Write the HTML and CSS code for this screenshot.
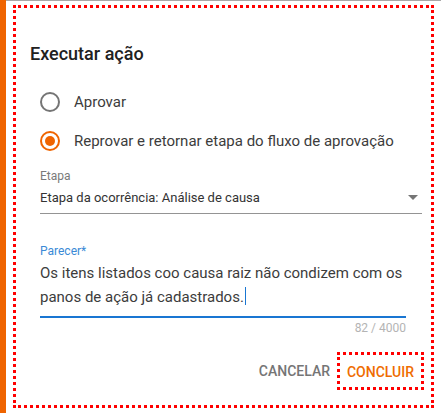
FILE: index.html
```html
<!DOCTYPE html>
<html lang="pt">
<head>
<meta charset="utf-8">
<title>Executar ação</title>
<link rel="stylesheet" href="styles.css">
</head>
<body>
<div class="page">
  <div class="side"></div>
  <div class="main">
    <div class="dialog">
      <h2 class="title">Executar ação</h2>
      <div class="radios">
        <div class="radio"><span class="circle"></span><span class="rlabel">Aprovar</span></div>
        <div class="radio on"><span class="circle"></span><span class="rlabel">Reprovar e retornar etapa do fluxo de aprovação</span></div>
      </div>
      <div class="field select">
        <div class="label">Etapa</div>
        <div class="control">
          <span class="value">Etapa da ocorrência: Análise de causa</span>
          <svg class="arrow" width="10" height="5" viewBox="0 0 10 5"><path d="M0 0h10L5 5z" fill="#757575"/></svg>
        </div>
      </div>
      <div class="field area">
        <div class="label focus">Parecer*</div>
        <div class="control">
          <div class="text">Os itens listados coo causa raiz não condizem com os panos de ação já cadastrados.<span class="caret"></span></div>
        </div>
        <div class="counter">82 / 4000</div>
      </div>
      <div class="actions">
        <button class="btn cancel">CANCELAR</button>
        <button class="btn primary">CONCLUIR</button>
      </div>
    </div>
  </div>
</div>
</body>
</html>
```

FILE: styles.css
```css
* { box-sizing: border-box; }
html, body { margin: 0; padding: 0; background: #fff; }
body { font-family: Roboto, "Noto Sans", sans-serif; color: rgba(0,0,0,.87); }

.page { display: flex; width: 441px; height: 413px; overflow: hidden; }
.side { width: 6px; flex: none; background: #ef6400; }
.main { flex: 1; border-top: 1px solid #a8a8a8; padding: 4px 0 0 7px; }

.dialog {
  width: 421px;
  height: 403px;
  border: 3px dotted #ff0000;
  display: flex;
  flex-direction: column;
}

.title {
  margin: 34px 0 0 14px;
  font-size: 18px;
  line-height: 24px;
  font-weight: 500;
  color: #212121;
}

.radios { display: flex; flex-direction: column; gap: 15px; margin-top: 24px; padding-left: 24px; }
.radio { display: flex; align-items: center; height: 24px; }
.circle {
  width: 20px; height: 20px; border-radius: 50%;
  border: 2px solid #757575; flex: none;
  display: flex; align-items: center; justify-content: center;
}
.radio.on .circle { border-color: #ef6400; }
.radio.on .circle::after { content: ""; width: 10px; height: 10px; border-radius: 50%; background: #ef6400; }
.rlabel { margin-left: 14px; font-size: 15px; line-height: 24px; color: #3c3c3c; }

.field { margin-left: 24px; }
.select { width: 382px; margin-top: 15px; }
.label { font-size: 12px; line-height: 16px; color: #7a7a7a; }
.label.focus { color: #3a8ad6; }
.select .control {
  margin-top: 4px;
  padding-bottom: 5px;
  border-bottom: 1px solid #949494;
  display: flex; align-items: center; justify-content: space-between;
  height: 26px;
}
.value { font-size: 13px; line-height: 20px; color: #333; }
.arrow { margin-right: 4px; margin-top: -2px; }

.area { width: 366px; margin-top: 29px; }
.area .control { margin-top: 2px; padding-bottom: 7px; border-bottom: 2px solid #1976d2; }
.text { font-size: 15px; line-height: 24px; color: #3c3c3c; }
.caret { display: inline-block; width: 1px; height: 18px; background: #1976d2; vertical-align: -3px; margin-left: 1px; }
.counter { margin-top: 2px; text-align: right; font-size: 12px; line-height: 16px; color: #b4b4b4; }

.actions { margin-top: auto; margin-bottom: 15px; margin-right: 7px; display: flex; justify-content: flex-end; align-items: center; }
.btn {
  font-family: Roboto, sans-serif; font-size: 14px; font-weight: 500;
  background: none; border: 0; padding: 0; cursor: pointer;
}
.cancel { color: #757575; margin-right: 7px; }
.primary {
  color: #ef6c00; width: 87px; height: 38px;
  border: 3px dotted #ff0000; padding-top: 2px;
}
```
